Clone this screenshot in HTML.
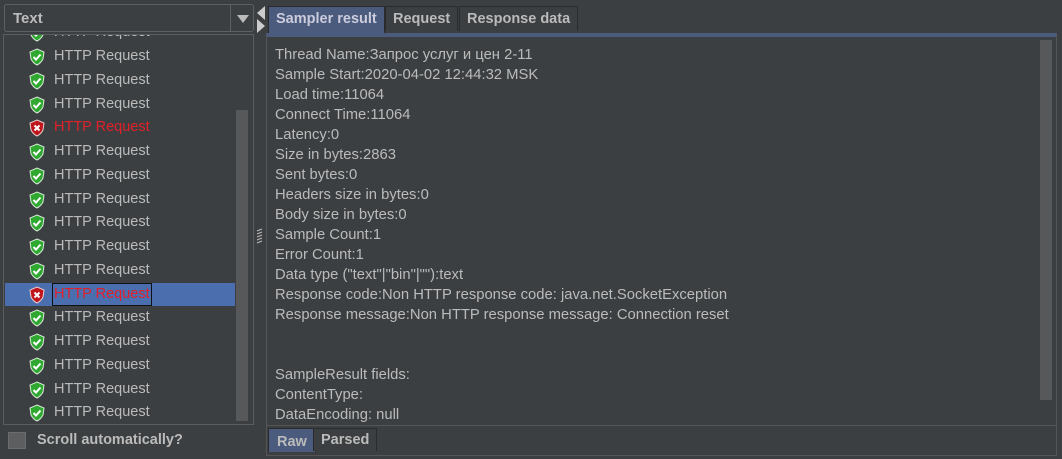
<!DOCTYPE html>
<html><head><meta charset="utf-8"><style>
*{margin:0;padding:0;box-sizing:border-box}
body{width:1062px;height:459px;background:#3c3f41;position:relative;overflow:hidden;font-family:"Liberation Sans","DejaVu Sans",sans-serif;color:#bbbbbb}
.abs{position:absolute}
.combo{left:4px;top:4px;width:250px;height:28px;border:1px solid #5e6163;border-radius:3px;background:#3c3f41}
.combo .t{position:absolute;left:8px;top:5px;font-size:15px;font-weight:bold;color:#bbb}
.combo .sep{position:absolute;left:225px;top:0;width:1px;height:26px;background:#5e6163}
.combo .arr{position:absolute;left:232px;top:10px;width:0;height:0;border-left:6px solid transparent;border-right:6px solid transparent;border-top:8px solid #bbb}
.list{left:3px;top:34px;width:251px;height:391px;border:1px solid #5b5e60;overflow:hidden;background:#3c3f41}
.row{position:absolute;left:1px;width:230px;height:23px;font-size:14.5px;line-height:23px}
.row svg{position:absolute;left:23px;top:3px}
.row span{position:absolute;left:49px;top:0;color:#bbb}
.row.err span{color:#e0202a}
.row.sel{background:#4b6eaf}
.row.sel span{outline:1px solid #111;outline-offset:0;padding:0 1px;left:48px;line-height:21px;top:1px}
.sb{left:236px;top:110px;width:12px;height:311px;background:#56585a;border-radius:1px}
.tab{position:absolute;top:6px;height:25px;font-size:14.5px;font-weight:bold;line-height:25px;padding:0 7px;color:#bbb;background:#3c3f41;border:1px solid #2b2b2b;border-bottom:none}
.panel{left:266px;top:33px;width:791px;height:393px;border:1px solid #555;border-top:4px solid #4a5b7d;background:#3c3f41}
.txt{position:absolute;left:8px;top:8px;font-size:14.8px;line-height:20px;color:#bbb;white-space:pre}
.vsb{left:1040px;top:40px;width:12px;height:360px;background:#56585a;border-radius:1px}
</style></head><body>
<div class="abs combo"><div class="t">Text</div><div class="sep"></div><div class="arr"></div></div>
<div class="abs list" id="l"></div>
<div class="abs sb"></div>
<div class="abs" style="left:257px;top:6px;width:0;height:0;border-top:7px solid transparent;border-bottom:7px solid transparent;border-right:8px solid #ccc"></div>
<div class="abs" style="left:257px;top:19px;width:0;height:0;border-top:7px solid transparent;border-bottom:7px solid transparent;border-left:8px solid #ccc"></div>
<svg class="abs" style="left:256px;top:228px" width="8" height="16"><path d="M1 3 L6 1 M1 6 L6 4 M1 9 L6 7 M1 12 L6 10 M1 15 L6 13" stroke="#bbb" stroke-width="1"/></svg>
<div class="abs" style="left:8px;top:432px;width:18px;height:17px;background:#5c5e60;border:1px solid #6a6c6e"></div>
<div class="abs" style="left:37px;top:432px;font-size:14.5px;font-weight:bold;color:#bbb">Scroll automatically?</div>

<div class="tab" style="left:268px;background:#4a5b7d;height:27px;color:#ccd">Sampler result</div>
<div class="tab" style="left:385px">Request</div>
<div class="tab" style="left:459px">Response data</div>
<div class="abs panel"><div class="txt">Thread Name:Запрос услуг и цен 2-11
Sample Start:2020-04-02 12:44:32 MSK
Load time:11064
Connect Time:11064
Latency:0
Size in bytes:2863
Sent bytes:0
Headers size in bytes:0
Body size in bytes:0
Sample Count:1
Error Count:1
Data type ("text"|"bin"|""):text
Response code:Non HTTP response code: java.net.SocketException
Response message:Non HTTP response message: Connection reset


SampleResult fields:
ContentType:
DataEncoding: null</div></div>
<div class="abs vsb"></div>
<div class="abs" style="left:266px;top:426px;width:791px;height:30px;border:1px solid #555;border-top:none"></div>
<div class="tab" style="left:268px;top:428px;height:24px;background:#4a5b7d;padding:0 8px;line-height:26px">Raw</div>
<div class="tab" style="left:313px;top:428px;height:23px;line-height:22px">Parsed</div>
<script>
var ok='<svg width="18" height="18" viewBox="0 0 18 18"><path d="M9 1 L16 4 L15 11 Q13 15 9 17 Q5 15 3 11 L2 4 Z" fill="#2fa82f" stroke="#d8ead8" stroke-width="1"/><path d="M5.5 9 L8 11.5 L12.5 6.5" fill="none" stroke="#fff" stroke-width="2"/></svg>';
var er='<svg width="18" height="18" viewBox="0 0 18 18"><path d="M9 1 L16 4 L15 11 Q13 15 9 17 Q5 15 3 11 L2 4 Z" fill="#c0141c" stroke="#e8d0d0" stroke-width="1"/><path d="M6.5 6.5 L11.5 11.5 M11.5 6.5 L6.5 11.5" stroke="#fff" stroke-width="2"/></svg>';
var h='';var tops=[-14,10,34,58,81,105,129,153,176,200,224,248,271,295,319,343,366];
for(var i=0;i<17;i++){var e=(i==4||i==11);h+='<div class="row'+(e?' err':'')+(i==11?' sel':'')+'" style="top:'+tops[i]+'px">'+(e?er:ok)+'<span>HTTP Request</span></div>';}
document.getElementById('l').innerHTML=h;
</script>
</body></html>
